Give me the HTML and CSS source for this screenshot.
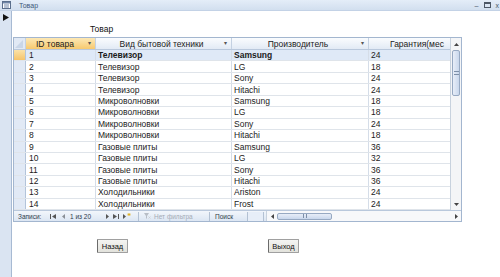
FILE: index.html
```html
<!DOCTYPE html>
<html lang="ru">
<head>
<meta charset="utf-8">
<title>Товар</title>
<link rel="stylesheet" href="styles.css">
</head>
<body>
<div class="titlebar">
  <svg class="ticon" width="9" height="8" viewBox="0 0 9 8"><rect x="0.5" y="0.5" width="8" height="7" fill="#fff" stroke="#5b6f8c"/><rect x="1" y="1" width="7" height="1.5" fill="#6f86a8"/><line x1="2" y1="4" x2="7" y2="4" stroke="#6f86a8"/><line x1="2" y1="6" x2="7" y2="6" stroke="#6f86a8"/></svg>
  <span class="ttext">Товар</span>
  <span class="tctl">
    <span class="tmin">&#8211;</span>
    <svg class="tmax" width="7" height="6" viewBox="0 0 7 6"><rect x="0.5" y="0.5" width="6" height="5" fill="none" stroke="#4d5866"/><line x1="0" y1="1.5" x2="7" y2="1.5" stroke="#4d5866"/></svg>
    <span class="tclose">x</span>
  </span>
</div>
<div class="win">
  <div class="strip">
    <svg class="strip-arrow" width="6" height="7" viewBox="0 0 6 7"><polygon points="0,0 6,3.5 0,7" fill="#111"/></svg>
  </div>
  <div class="content">
    <div class="caption">Товар</div>
    <div class="ds">
      <div class="ds-top">
        <div class="grid">
          <div class="row head">
            <div class="c sel"><svg width="8" height="8" viewBox="0 0 8 8"><polygon points="8,0 8,8 0,8" fill="#c9d6e8"/></svg></div>
            <div class="c id hid">ID товара<span class="dd">&#9662;</span></div>
            <div class="c vid hc">Вид бытовой техники<span class="dd">&#9662;</span></div>
            <div class="c prod hc">Производитель<span class="dd">&#9662;</span></div>
            <div class="c gar hg">Гарантия(мес</div>
          </div>
          <div class="row cur"><div class="c sel selcur"></div><div class="c id">1</div><div class="c vid">Телевизор</div><div class="c prod">Samsung</div><div class="c gar">24</div></div>
          <div class="row"><div class="c sel"></div><div class="c id">2</div><div class="c vid">Телевизор</div><div class="c prod">LG</div><div class="c gar">18</div></div>
          <div class="row"><div class="c sel"></div><div class="c id">3</div><div class="c vid">Телевизор</div><div class="c prod">Sony</div><div class="c gar">24</div></div>
          <div class="row"><div class="c sel"></div><div class="c id">4</div><div class="c vid">Телевизор</div><div class="c prod">Hitachi</div><div class="c gar">24</div></div>
          <div class="row"><div class="c sel"></div><div class="c id">5</div><div class="c vid">Микроволновки</div><div class="c prod">Samsung</div><div class="c gar">18</div></div>
          <div class="row"><div class="c sel"></div><div class="c id">6</div><div class="c vid">Микроволновки</div><div class="c prod">LG</div><div class="c gar">18</div></div>
          <div class="row"><div class="c sel"></div><div class="c id">7</div><div class="c vid">Микроволновки</div><div class="c prod">Sony</div><div class="c gar">24</div></div>
          <div class="row"><div class="c sel"></div><div class="c id">8</div><div class="c vid">Микроволновки</div><div class="c prod">Hitachi</div><div class="c gar">18</div></div>
          <div class="row"><div class="c sel"></div><div class="c id">9</div><div class="c vid">Газовые плиты</div><div class="c prod">Samsung</div><div class="c gar">36</div></div>
          <div class="row"><div class="c sel"></div><div class="c id">10</div><div class="c vid">Газовые плиты</div><div class="c prod">LG</div><div class="c gar">32</div></div>
          <div class="row"><div class="c sel"></div><div class="c id">11</div><div class="c vid">Газовые плиты</div><div class="c prod">Sony</div><div class="c gar">36</div></div>
          <div class="row"><div class="c sel"></div><div class="c id">12</div><div class="c vid">Газовые плиты</div><div class="c prod">Hitachi</div><div class="c gar">36</div></div>
          <div class="row"><div class="c sel"></div><div class="c id">13</div><div class="c vid">Холодильники</div><div class="c prod">Ariston</div><div class="c gar">24</div></div>
          <div class="row"><div class="c sel"></div><div class="c id">14</div><div class="c vid">Холодильники</div><div class="c prod">Frost</div><div class="c gar">24</div></div>
        </div>
        <div class="vscroll">
          <div class="sarrow"><svg width="5" height="3" viewBox="0 0 5 3"><polygon points="0,3 2.5,0 5,3" fill="#444"/></svg></div>
          <div class="vthumb"><span class="grip"></span></div>
          <div class="vtrack"></div>
          <div class="sarrow"><svg width="5" height="3" viewBox="0 0 5 3"><polygon points="0,0 5,0 2.5,3" fill="#444"/></svg></div>
        </div>
      </div>
      <div class="nav">
        <span class="nlabel">Записи:</span>
        <span class="nbtn">
          <svg width="6" height="5" viewBox="0 0 6 5"><rect x="0" y="0" width="1" height="5" fill="#555"/><polygon points="6,0 6,5 2,2.5" fill="#555"/></svg>
        </span>
        <span class="nbtn nprev">
          <svg width="3" height="5" viewBox="0 0 3 5"><polygon points="3,0 3,5 0,2.5" fill="#8a8f96"/></svg>
        </span>
        <span class="ncount">1 из 20</span>
        <span class="nbtn nnext">
          <svg width="3" height="5" viewBox="0 0 3 5"><polygon points="0,0 0,5 3,2.5" fill="#555"/></svg>
        </span>
        <span class="nbtn">
          <svg width="6" height="5" viewBox="0 0 6 5"><polygon points="0,0 0,5 4,2.5" fill="#555"/><rect x="5" y="0" width="1" height="5" fill="#555"/></svg>
        </span>
        <span class="nbtn">
          <svg width="8" height="6" viewBox="0 0 8 6"><polygon points="0,1 0,6 3,3.5" fill="#555"/><path d="M6 0v3M4.5 1.5h3M5 0.5l2 2M7 0.5l-2 2" stroke="#e0b020" stroke-width="0.8"/></svg>
        </span>
        <span class="nsep"></span>
        <span class="nfilter">
          <svg width="7" height="6" viewBox="0 0 7 6"><polygon points="0,0 5,0 3,3 3,6 2,5 2,3" fill="#b8bec6"/><path d="M4.5 3.5l2 2M6.5 3.5l-2 2" stroke="#c9cdd2" stroke-width="0.8"/></svg>
          Нет фильтра
        </span>
        <span class="nsep"></span>
        <span class="nsearch">Поиск</span>
        <span class="nbox"></span>
        <span class="nbox2"></span>
        <div class="hscroll">
          <span class="harrow"><svg width="3" height="5" viewBox="0 0 3 5"><polygon points="3,0 3,5 0,2.5" fill="#444"/></svg></span>
          <span class="hthumb"><span class="hgrip"></span></span>
          <span class="htrack"></span>
          <span class="harrow"><svg width="3" height="5" viewBox="0 0 3 5"><polygon points="0,0 0,5 3,2.5" fill="#444"/></svg></span>
        </div>
      </div>
    </div>
    <div class="buttons">
      <button class="btn">Назад</button>
      <button class="btn">Выход</button>
    </div>
  </div>
</div>
</body>
</html>
```

FILE: styles.css
```css
* { box-sizing: border-box; }
html, body { margin: 0; padding: 0; }
body {
  width: 500px;
  height: 277px;
  overflow: hidden;
  background: #fff;
  font-family: "Liberation Sans", Arial, sans-serif;
  font-size: 8.5px;
  color: #1b1b1b;
}
.titlebar {
  height: 11px;
  display: flex;
  align-items: center;
  background: linear-gradient(#e4edf8, #d2dfef);
  border-bottom: 1px solid #c3d2e6;
  padding-left: 2px;
}
.ticon { display: block; }
.ttext {
  margin-left: 8px;
  font-size: 7px;
  color: #3e5878;
}
.tctl {
  margin-left: auto;
  display: flex;
  align-items: center;
  gap: 5px;
  margin-right: 1px;
  color: #4d5866;
  font-size: 8px;
}
.tmin { font-size: 7px; line-height: 1; }
.tclose { font-size: 7px; line-height: 1; }
.win {
  display: flex;
  height: 266px;
}
.strip {
  width: 12px;
  flex: none;
  background: #dae4f2;
  border-right: 1px solid #a7bad3;
  padding: 3px 0 0 3px;
}
.strip-arrow { display: block; }
.content {
  flex: 1;
  padding-left: 1px;
}
.caption {
  height: 26px;
  padding-top: 12px;
  padding-left: 77px;
  font-size: 8.5px;
  line-height: 12px;
  color: #111;
}
.ds {
  width: 449px;
  border: 1px solid #a3b6cf;
  display: flex;
  flex-direction: column;
}
.ds-top { display: flex; }
.grid { flex: 1; overflow: hidden; }
.row {
  display: flex;
  height: 11.45px;
  border-bottom: 1px solid #dfe4ea;
}
.row.head {
  height: 12px;
  background: linear-gradient(#fafcfe, #e2eaf5);
  border-bottom: 1px solid #b9c8dc;
}
.c {
  flex: none;
  height: 100%;
  display: flex;
  align-items: center;
  padding-left: 2px;
  border-right: 1px solid #d5dde8;
  white-space: nowrap;
  overflow: hidden;
  position: relative;
}
.sel {
  width: 12px;
  background: #e1e9f5;
  border-right: 1px solid #b3c4da;
  padding: 0;
}
.head .sel { align-items: flex-end; justify-content: flex-end; padding: 0 1px 1px 0; }
.selcur { background: linear-gradient(#fbe2a8, #f6c46a); }
.id { width: 70px; padding-left: 3px; }
.vid { width: 136px; }
.prod { width: 137px; }
.gar { width: 82px; border-right: none; }
.head .c { border-right-color: #c4d1e2; justify-content: center; }
.head .hid {
  background: linear-gradient(#fde8b5, #f7c96f);
  justify-content: flex-start;
  padding-left: 10px;
}
.head .hc { padding-right: 6px; }
.head .hg { justify-content: flex-start; padding-left: 21px; }
.dd {
  position: absolute;
  right: 4px;
  top: 1px;
  font-size: 6px;
  color: #555;
}
.row.cur { background: #dfe9f7; }
.row.cur .vid, .row.cur .prod { font-weight: bold; }
.vscroll {
  width: 11px;
  flex: none;
  display: flex;
  flex-direction: column;
  border-left: 1px solid #c8d2de;
  background: #f4f5f7;
}
.sarrow {
  height: 12px;
  display: flex;
  align-items: center;
  justify-content: center;
}
.vthumb {
  height: 46px;
  margin: 0 1px;
  border: 1px solid #97a9c2;
  border-radius: 2px;
  background: linear-gradient(90deg, #e8eef8, #c9d7ec);
  display: flex;
  align-items: center;
  justify-content: center;
}
.grip {
  width: 5px;
  height: 4px;
  border-top: 1px solid #7d8fa8;
  border-bottom: 1px solid #7d8fa8;
}
.vtrack { flex: 1; }
.nav {
  height: 11px;
  display: flex;
  align-items: center;
  background: linear-gradient(#f2f6fb, #dce6f3);
  border-top: 1px solid #b9c8dc;
  font-size: 6.5px;
  color: #2f3b4a;
  padding-left: 4px;
}
.nlabel { width: 32px; }
.nbtn {
  display: flex;
  align-items: center;
  margin-right: 4px;
}
.nprev { margin-left: 2px; margin-right: 5px; }
.ncount { width: 36px; }
.nnext { margin-right: 4px; }
.nsep {
  width: 1px;
  height: 9px;
  background: #b3c1d3;
  margin: 0 5px 0 3px;
}
.nfilter {
  display: flex;
  align-items: center;
  gap: 3px;
  color: #a5acb6;
  width: 62px;
}
.nsearch { width: 32px; color: #2f3b4a; }
.nbox {
  width: 16px;
  height: 9px;
  border-left: 1px solid #b3c1d3;
  background: #e7eef8;
}
.nbox2 {
  width: 3px;
  height: 9px;
  border-left: 1px solid #b3c1d3;
}
.hscroll {
  flex: 1;
  height: 10px;
  display: flex;
  align-items: center;
  background: #f7f8fa;
  border-left: 1px solid #c8d2de;
}
.harrow {
  width: 10px;
  display: flex;
  justify-content: center;
}
.hthumb {
  width: 55px;
  height: 7px;
  border: 1px solid #97a9c2;
  border-radius: 2px;
  background: linear-gradient(#e8eef8, #c9d7ec);
  display: flex;
  align-items: center;
  justify-content: center;
}
.hgrip {
  width: 4px;
  height: 4px;
  border-left: 1px solid #7d8fa8;
  border-right: 1px solid #7d8fa8;
}
.htrack { flex: 1; }
.buttons {
  display: flex;
  gap: 140px;
  padding-left: 84px;
  margin-top: 17px;
}
.btn {
  width: 31px;
  height: 14px;
  padding: 0;
  font-family: "Liberation Sans", Arial, sans-serif;
  font-size: 7.5px;
  color: #111;
  background: linear-gradient(#f4f4f2, #e2e2dc);
  border: 1px solid #a0a0a0;
  border-left-color: #6b6b6b;
  border-radius: 1px;
}
```
